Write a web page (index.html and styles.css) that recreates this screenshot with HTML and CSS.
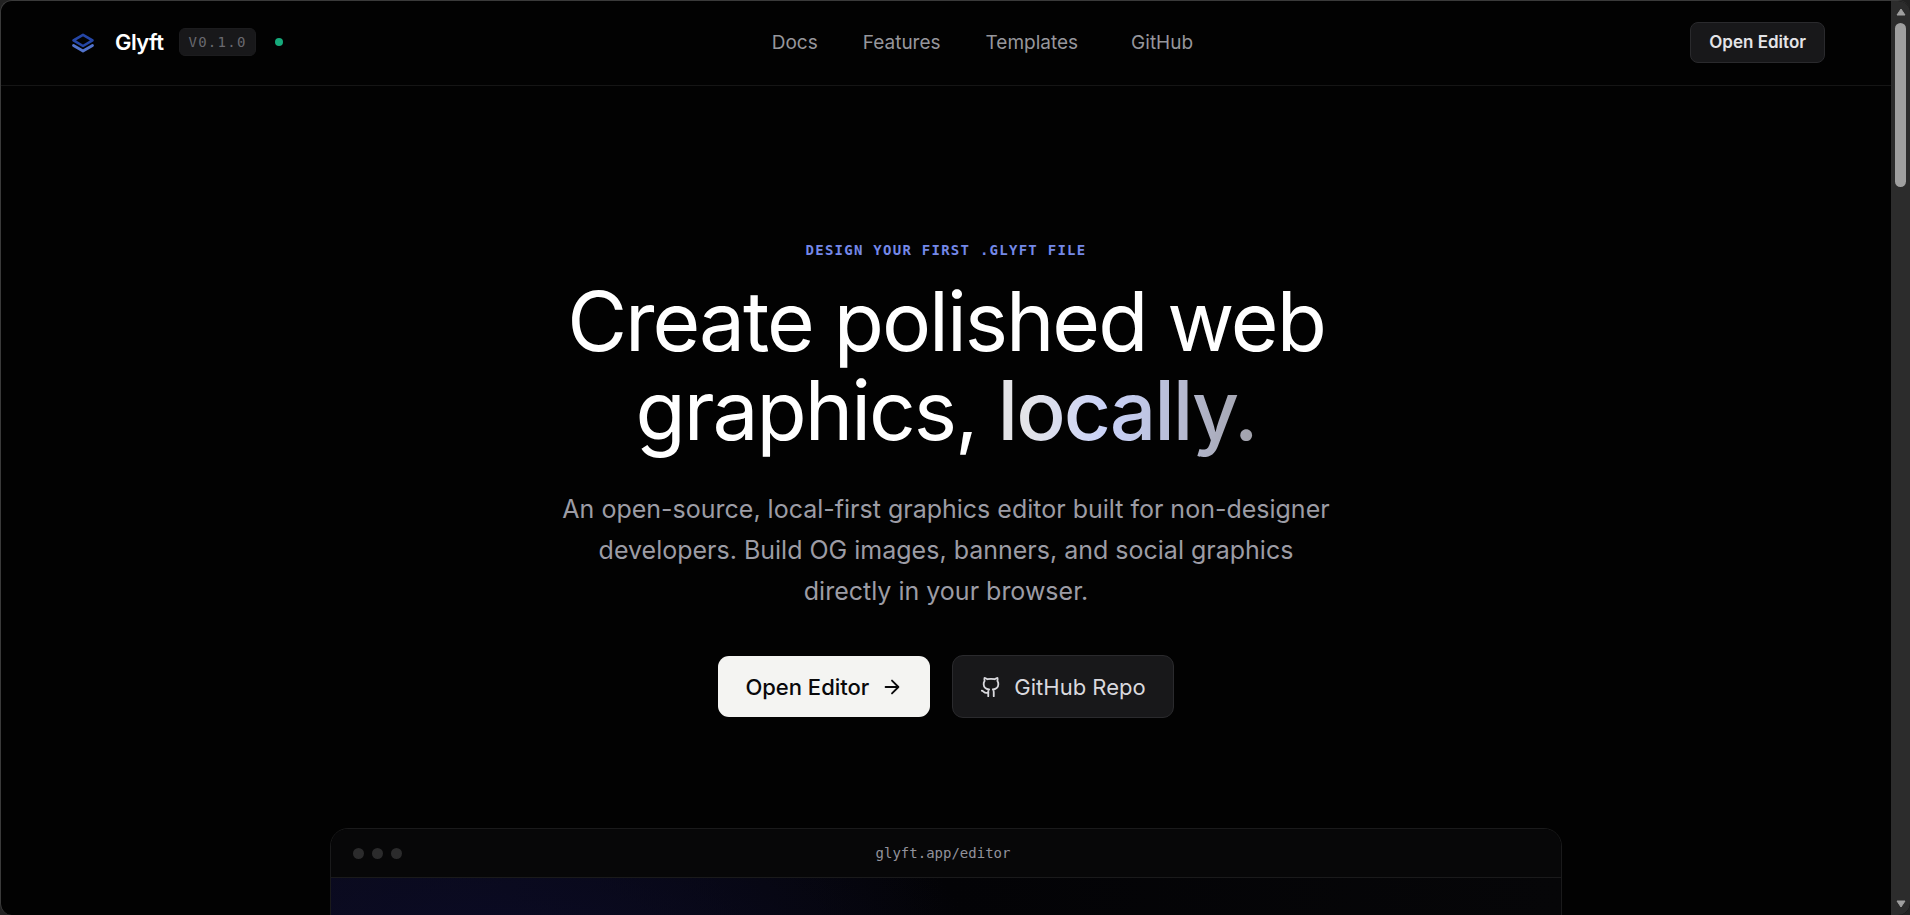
FILE: index.html
```html
<!DOCTYPE html>
<html lang="en">
  <head>
    <meta charset="utf-8">
    <meta name="viewport" content="width=device-width, initial-scale=1">
    <title>Glyft</title>
    <link rel="stylesheet" href="styles.css">
  </head>
  <body>
    <div class="window">
      <div class="page">
        <header class="header">
          <div class="brand">
            <a class="brand-link" href="#">
              <svg class="logo" viewBox="0 0 32 32" fill="none" stroke-linejoin="round" stroke-linecap="round">
                <path d="M6.500 19.500 16 25l9.500-5.500" stroke="#5273cc" stroke-width="2.800"/>
                <path d="M16 8.800 25.500 14.400 16 20 6.500 14.400z" stroke="#2546a6" stroke-width="2.600"/>
              </svg>
              <span class="brand-name">Glyft</span>
            </a>
            <span class="version">V0.1.0</span>
            <span class="status"></span>
          </div>
          <nav class="nav">
            <a href="#docs">Docs</a>
            <a href="#features">Features</a>
            <a href="#templates">Templates</a>
            <a class="external" href="#github">GitHub</a>
          </nav>
          <button class="header-button" type="button">Open Editor</button>
        </header>

        <main class="hero">
          <p class="eyebrow">DESIGN YOUR FIRST .GLYFT FILE</p>
          <h1>Create polished web graphics, <span class="accent">locally.</span></h1>
          <p class="lead">An open-source, local-first graphics editor built for non-designer developers. Build OG images, banners, and social graphics directly in your browser.</p>
          <div class="actions">
            <button class="button primary" type="button">
              Open Editor
              <svg class="icon" viewBox="0 0 24 24" fill="none" stroke="currentColor" stroke-width="2" stroke-linecap="round" stroke-linejoin="round">
                <path d="M5 12h14M12 5l7 7-7 7"/>
              </svg>
            </button>
            <a class="button secondary" href="#github">
              <svg class="icon" viewBox="0 0 24 24" fill="none" stroke="currentColor" stroke-width="2" stroke-linecap="round" stroke-linejoin="round">
                <path d="M15 22v-4a4.800 4.800 0 0 0-1-3.500c3 0 6-2 6-5.500.08-1.250-.27-2.480-1-3.500.28-1.150.28-2.350 0-3.500 0 0-1 0-3 1.500-2.640-.5-5.360-.5-8 0C6 2 5 2 5 2c-.3 1.150-.3 2.350 0 3.500A5.403 5.403 0 0 0 4 9c0 3.500 3 5.500 6 5.500-.39.490-.680 1.050-.850 1.650-.170.600-.220 1.230-.150 1.850v4"/>
                <path d="M9 18c-4.510 2-5-2-7-2"/>
              </svg>
              GitHub Repo
            </a>
          </div>
          <div class="preview">
            <div class="preview-bar">
              <div class="dots"><i></i><i></i><i></i></div>
              <span class="url">glyft.app/editor</span>
              <span></span>
            </div>
            <div class="preview-body"></div>
          </div>
        </main>
      </div>

      <div class="scrollbar">
        <svg class="arrow" viewBox="0 0 10 8"><path d="M5 1 9 7H1z" fill="#9f9f9f" stroke="#9f9f9f" stroke-linejoin="round"/></svg>
        <div class="thumb"></div>
        <svg class="arrow down" viewBox="0 0 10 8"><path d="M5 7 9 1H1z" fill="#9f9f9f" stroke="#9f9f9f" stroke-linejoin="round"/></svg>
      </div>
    </div>
  </body>
</html>
```
FILE: styles.css
```css
* {
  box-sizing: border-box;
}

body {
  margin: 0;
  background: #222;
  color: #fff;
  font-family: Inter, "Liberation Sans", sans-serif;
}

a {
  color: inherit;
  text-decoration: none;
}

button {
  font-family: inherit;
  cursor: pointer;
}

.window {
  display: flex;
  height: 100vh;
  overflow: hidden;
  background: #020202;
  border: 1px solid #3a3a3a;
  border-right: 0;
  border-bottom: 0;
  border-radius: 12px;
}

.page {
  flex: 1;
  min-width: 0;
  overflow: hidden;
}

/* header */
.header {
  display: flex;
  justify-content: space-between;
  align-items: center;
  height: 85px;
  padding: 0 66px 2px;
  border-bottom: 1px solid #151515;
}

.brand,
.brand-link {
  display: flex;
  align-items: center;
}

.brand-link {
  gap: 16px;
}

.logo {
  width: 32px;
  height: 32px;
}

.brand-name {
  font-size: 22px;
  font-weight: 600;
  letter-spacing: -0.025em;
}

.version {
  margin: 0 19px 0 16px;
  padding: 0 8px;
  border: 1px solid #1c1c1e;
  border-radius: 6px;
  background: #18181a;
  color: #69696f;
  font-family: "DejaVu Sans Mono", monospace;
  font-size: 14px;
  line-height: 26px;
  letter-spacing: 0.09em;
}

.status {
  width: 8px;
  height: 8px;
  border-radius: 50%;
  background: #16aa7b;
}

.nav {
  display: flex;
  gap: 45px;
  color: #96969c;
  font-size: 19px;
}

.external {
  padding: 0 8px;
}

.header-button {
  height: 41px;
  padding: 0 18px;
  border: 1px solid #2a2a2d;
  border-radius: 8px;
  background: #18181a;
  color: #e4e4e7;
  font-size: 17px;
  font-weight: 600;
}

/* hero */
.hero {
  display: flex;
  flex-direction: column;
  align-items: center;
  padding: 154px 24px 0;
  text-align: center;
}

.eyebrow {
  margin: 0 0 17px;
  color: #7488e8;
  font-family: "DejaVu Sans Mono", monospace;
  font-size: 14px;
  font-weight: 700;
  line-height: 20px;
  letter-spacing: 0.09em;
}

h1 {
  max-width: 900px;
  margin: 0;
  font-size: 82px;
  font-weight: 400;
  line-height: 89px;
  letter-spacing: -0.025em;
}

.accent {
  background: linear-gradient(90deg, #e4e4e7 10%, #c9d2f8 42%, #a1a1aa);
  background-clip: text;
  -webkit-background-clip: text;
  color: transparent;
  font-weight: 500;
}

.lead {
  max-width: 780px;
  margin: 34px 0 43px;
  color: #9c9ca5;
  font-size: 25px;
  line-height: 41px;
}

.actions {
  display: flex;
  align-items: center;
  gap: 22px;
}

.button {
  display: flex;
  align-items: center;
  gap: 12px;
  height: 61px;
  padding: 0 27px;
  border: 0;
  border-radius: 11px;
  font-size: 22px;
}

.primary {
  background: #f4f4f2;
  color: #09090b;
  font-weight: 500;
}

.secondary {
  height: 63px;
  border: 1px solid #2a2a2d;
  background: #18181a;
  color: #d9d9de;
}

.icon {
  width: 22px;
  height: 22px;
}

/* editor preview */
.preview {
  width: 100%;
  max-width: 1232px;
  margin-top: 110px;
  overflow: hidden;
  border: 1px solid #1a1a1b;
  border-radius: 18px;
}

.preview-bar {
  display: grid;
  grid-template-columns: 1fr auto 1fr;
  align-items: center;
  height: 49px;
  padding: 0 28px 0 22px;
  border-bottom: 1px solid #1a1a1b;
  background: #070708;
}

.dots {
  display: flex;
  gap: 8px;
}

.dots i {
  width: 11px;
  height: 11px;
  border-radius: 50%;
  background: #2b2b2c;
}

.url {
  color: #92929b;
  font-family: "DejaVu Sans Mono", monospace;
  font-size: 14px;
}

.preview-body {
  height: 600px;
  background:
    radial-gradient(ellipse 500px 240px at 12% 90px, #0b0b26, transparent),
    linear-gradient(90deg, #0a0a17, #030306 50%, #060608);
}

/* scrollbar */
.scrollbar {
  display: flex;
  flex-direction: column;
  align-items: center;
  width: 19px;
  padding: 7px 0;
  background: #2c2c2c;
}

.arrow {
  width: 10px;
  height: 8px;
}

.thumb {
  width: 11px;
  height: 164px;
  margin-top: 7px;
  border-radius: 6px;
  background: #9f9f9f;
}

.down {
  margin-top: auto;
}
```
